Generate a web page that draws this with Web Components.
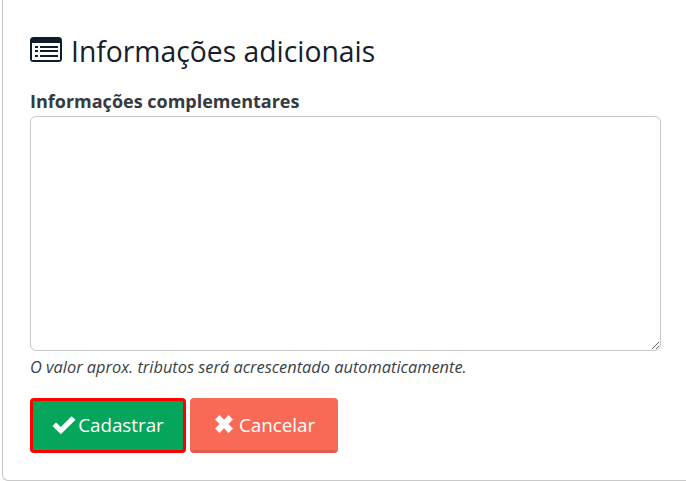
<!DOCTYPE html>
<html lang="pt"><head><meta charset="utf-8"><title>Informações adicionais</title>
<style>
html,body{margin:0;height:481px;overflow:hidden;background:#fff;font-family:"Open Sans","Noto Sans",sans-serif;color:#212529}
</style></head><body>
<x-card>
  <x-heading>Informações adicionais</x-heading>
  <x-field label="Informações complementares" hint="O valor aprox. tributos será acrescentado automaticamente."></x-field>
  <x-actions>
    <x-btn kind="save" icon="check">Cadastrar</x-btn>
    <x-btn kind="cancel" icon="times">Cancelar</x-btn>
  </x-actions>
</x-card>
<script>
function def(name,html,init){customElements.define(name,class extends HTMLElement{constructor(){super();this.attachShadow({mode:'open'}).innerHTML=html;}connectedCallback(){init&&init.call(this,this.shadowRoot);}});}
def('x-card',`<style>:host{display:block;box-sizing:border-box;width:684px;height:481px;margin-left:2px;padding:32px 0 0 27px;border:1px solid #c8c8c8;border-top:0;border-right:0;border-radius:0 0 0 6px;}</style><slot></slot>`);
def('x-heading',`<style>:host{display:flex;align-items:center;gap:9px;height:38px;font-size:28.3px;line-height:38px;color:#16202c}svg{width:32px;height:25px;flex:none;margin-top:-3px}</style>
<svg viewBox="0 0 32 25"><rect width="32" height="25" rx="3.5" fill="#0f1c2b"/><rect x="2" y="6" width="28" height="17" fill="#fff"/><g fill="#0f1c2b"><rect x="5" y="9" width="3" height="2"/><rect x="5" y="13" width="3" height="2"/><rect x="5" y="18" width="3" height="2"/><rect x="10" y="9" width="18" height="2"/><rect x="10" y="13" width="18" height="2"/><rect x="10" y="18" width="18" height="2"/></g></svg><span><slot></slot></span>`);
def('x-field',`<style>:host{display:block;margin-top:19px;width:631px}
label{display:block;font-weight:700;font-size:18px;line-height:24px;color:#343a40;margin-bottom:3px}
textarea{display:block;box-sizing:border-box;width:631px;height:235px;margin:0;border:1px solid #c8c8c8;border-radius:6px;background:#fff;outline:0;padding:6px 12px;font:inherit}
p{margin:5px 0 0;font-style:italic;font-size:16.37px;line-height:22px;color:#3a3f44}</style>
<label for="t"></label><textarea id="t"></textarea><p></p>`,function(s){s.querySelector('label').textContent=this.getAttribute('label');s.querySelector('p').textContent=this.getAttribute('hint');});
def('x-actions',`<style>:host{display:flex;gap:4px;margin-top:20px}</style><slot></slot>`);
const icons={check:'<path d="M.5 13 4 9.4 8.8 14 19.6 3.2 23.5 6.8 8.8 21.2Z" fill="#fff"/>',times:'<path d="M6.5 2 11 6.7 15.5 2 20 6.5 15.5 11 20 15.5 15.5 20 11 15.3 6.5 20 2 15.5 6.5 11 2 6.5Z" fill="#fff"/>'};
def('x-btn',`<style>:host{display:block}
button{display:flex;align-items:center;justify-content:center;gap:2px;box-sizing:border-box;height:55px;padding:0 0 2px;border-radius:4px;color:#fff;font:400 18.8px "Open Sans","Noto Sans",sans-serif;cursor:pointer}
:host([kind=save]) button{width:156px;background:#05a65b;border:3px solid #ff0000;}
:host([kind=cancel]) button{width:148px;background:#f96a56;border:1px solid #f96a56;border-bottom:3px solid #e55a48;padding-bottom:0}
svg{flex:none;width:24px;height:24px}</style><button type="button"><svg viewBox="0 0 24 24"></svg><slot></slot></button>`,function(s){s.querySelector('svg').innerHTML=icons[this.getAttribute('icon')];});
</script>
</body></html>
